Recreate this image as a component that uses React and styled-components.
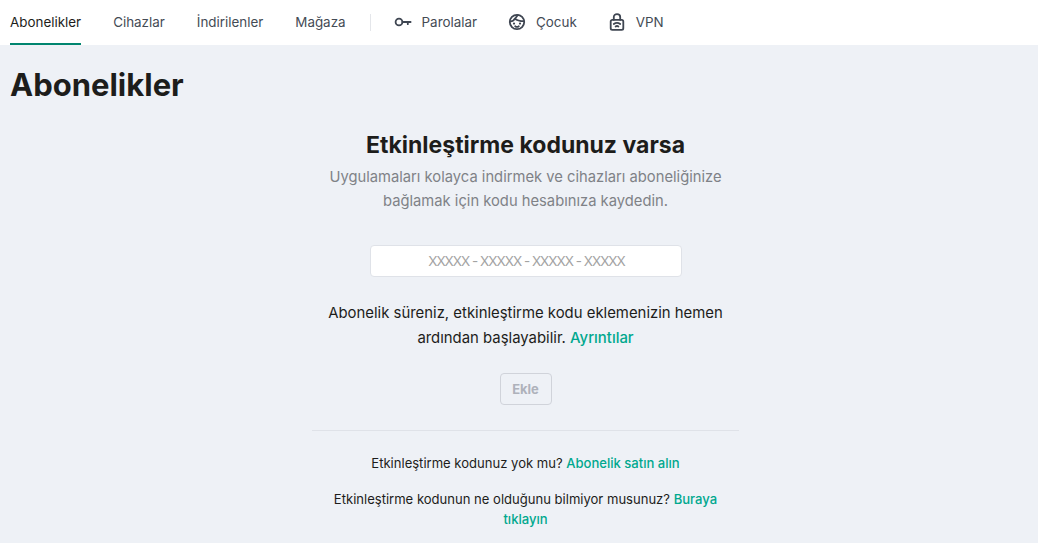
import React from 'react';
import styled, { createGlobalStyle } from 'styled-components';

const GlobalStyle = createGlobalStyle`
  html, body {
    margin: 0;
    padding: 0;
    height: 100%;
    overflow: hidden;
    background: #eef1f6;
    font-family: Inter, "Liberation Sans", sans-serif;
  }
`;

const Page = styled.div`
  width: 1038px;
  height: 543px;
  overflow: hidden;
  background: #eef1f6;
`;

const Nav = styled.nav`
  display: flex;
  align-items: stretch;
  height: 45px;
  padding-left: 10px;
  background: #fff;
`;

const Tab = styled.a`
  display: flex;
  align-items: center;
  gap: 9px;
  margin-right: ${p => p.$gap || 32}px;
  padding-top: 1px;
  font-size: 13.4px;
  color: ${p => (p.$active ? '#1d1d1b' : '#444b55')};
  border-bottom: 2px solid ${p => (p.$active ? '#00856f' : 'transparent')};
  box-sizing: border-box;
`;

const Divider = styled.div`
  width: 1px;
  height: 17px;
  margin: 14px 22px 0 0;
  background: #e4e6ea;
`;

const Content = styled.main`
  padding: 22px 0 0 10px;
`;

const Title = styled.h1`
  margin: 0;
  font-size: 31px;
  line-height: 36px;
  font-weight: 700;
  color: #1d1d1b;
`;

const Center = styled.section`
  width: 427px;
  margin: 28px auto 0;
  padding-left: 3px;
  display: flex;
  flex-direction: column;
  align-items: center;
  text-align: center;
`;

const Heading = styled.h2`
  margin: 0;
  font-size: 23px;
  line-height: 28px;
  font-weight: 700;
  color: #1d1d1b;
`;

const Lead = styled.p`
  margin: 6px 0 0;
  width: 400px;
  font-size: 14.75px;
  line-height: 24px;
  color: #7f8287;
`;

const CodeInput = styled.input`
  box-sizing: border-box;
  width: 312px;
  height: 32px;
  margin-top: 32px;
  padding: 0 0 0 2px;
  border: 1px solid #dfe2e8;
  border-radius: 4px;
  background: #fff;
  text-align: center;
  letter-spacing: -1px;
  font: 13.5px Inter, "Liberation Sans", sans-serif;
  &::placeholder {
    color: #a3a3a3;
    opacity: 1;
  }
`;

const Note = styled.p`
  margin: 24px 0 0;
  width: 420px;
  font-size: 14.9px;
  line-height: 24.5px;
  color: #1d1d1b;
`;

const Link = styled.a`
  color: #00a88e;
  font-weight: 500;
`;

const AddButton = styled.button`
  width: 52px;
  height: 32px;
  margin-top: 23px;
  border: 1px solid #d0d3da;
  border-radius: 4px;
  background: transparent;
  color: #aeb2bb;
  font: 700 13px Inter, "Liberation Sans", sans-serif;
`;

const Rule = styled.hr`
  width: 100%;
  height: 1px;
  margin: 25px 0 0;
  border: 0;
  background: #dfe2e8;
`;

const Help = styled.p`
  margin: ${p => p.$top}px 0 0;
  width: 400px;
  font-size: 13.05px;
  line-height: 20px;
  color: #1d1d1b;
`;

const Glyph = styled.svg`
  width: 20px;
  height: 20px;
  fill: none;
  stroke: #3f4652;
  stroke-width: 1.8;
  stroke-linecap: round;
  stroke-linejoin: round;
  flex: none;
`;

const Dot = styled.circle`
  fill: #3f4652;
  stroke: none;
`;

const KeyIcon = () => (
  <Glyph viewBox="0 0 20 20">
    <circle cx="6" cy="10" r="3.4" />
    <path d="M9.4 10H17.6M14.8 10V12.2" />
  </Glyph>
);

const KidIcon = () => (
  <Glyph viewBox="0 0 20 20">
    <circle cx="10" cy="10" r="7.2" />
    <path d="M3 9.3C5.2 9.6 6.8 8.4 7.8 6.6C9.6 8.2 13 9.2 17 9.2" />
    <path d="M10.8 3L8.4 6.2" />
    <Dot cx="7" cy="11.6" r="1.1" />
    <Dot cx="13" cy="11.6" r="1.1" />
    <path d="M8.2 14.2C9.3 15.1 10.7 15.1 11.8 14.2" />
  </Glyph>
);

const LockIcon = () => (
  <Glyph viewBox="0 0 20 20">
    <rect x="3.7" y="7.8" width="12.6" height="10" rx="1.6" />
    <path d="M6.8 7.8V5C6.8 3.2 8.2 2.2 10 2.2C11.8 2.2 13.2 3.2 13.2 5V7.8" />
    <path d="M6.8 12C8.7 10.6 11.3 10.6 13.2 12M8.6 14.5C9.4 13.9 10.6 13.9 11.4 14.5" />
  </Glyph>
);

export default function App() {
  return (
    <Page>
      <GlobalStyle />
      <Nav>
        <Tab $active>Abonelikler</Tab>
        <Tab>Cihazlar</Tab>
        <Tab>İndirilenler</Tab>
        <Tab $gap={24}>Mağaza</Tab>
        <Divider />
        <Tab $gap={30}><KeyIcon />Parolalar</Tab>
        <Tab $gap={30}><KidIcon />Çocuk</Tab>
        <Tab><LockIcon />VPN</Tab>
      </Nav>
      <Content>
        <Title>Abonelikler</Title>
        <Center>
          <Heading>Etkinleştirme kodunuz varsa</Heading>
          <Lead>Uygulamaları kolayca indirmek ve cihazları aboneliğinize bağlamak için kodu hesabınıza kaydedin.</Lead>
          <CodeInput placeholder="XXXXX - XXXXX - XXXXX - XXXXX" />
          <Note>
            Abonelik süreniz, etkinleştirme kodu eklemenizin hemen ardından başlayabilir. <Link>Ayrıntılar</Link>
          </Note>
          <AddButton disabled>Ekle</AddButton>
          <Rule />
          <Help $top={22}>
            Etkinleştirme kodunuz yok mu? <Link>Abonelik satın alın</Link>
          </Help>
          <Help $top={16}>
            Etkinleştirme kodunun ne olduğunu bilmiyor musunuz? <Link>Buraya tıklayın</Link>
          </Help>
        </Center>
      </Content>
    </Page>
  );
}
